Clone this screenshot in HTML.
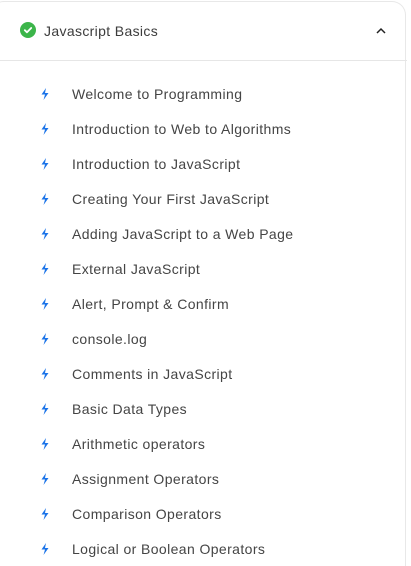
<!DOCTYPE html>
<html><head><style>
html,body{margin:0;background:#fff;font-family:"Liberation Sans",sans-serif;width:411px;height:566px;overflow:hidden}
.wrap{position:relative;width:411px;height:566px;overflow:hidden}
.card{position:absolute;left:-10px;top:1px;width:416px;height:565px;border:1px solid #e8e8e8;border-bottom:none;border-radius:14px 14px 0 0;box-sizing:border-box}
.hdr{position:absolute;left:0;top:0;width:407px;height:60px;border-bottom:1px solid #e6e6e6}
.chk{position:absolute;left:20px;top:22px;width:16px;height:16px;border-radius:50%;background:#3cb54a}
.title{position:absolute;left:44px;top:23px;font-size:14px;color:#3c3c3c;letter-spacing:0.35px}
.car{position:absolute;left:374px;top:24px}
.item{position:absolute;left:72px;font-size:14px;color:#444;letter-spacing:0.4px}
.ic{position:absolute;left:40px}
</style></head><body>
<div class="wrap">
<div class="card"></div>
<div class="hdr">
<div class="chk"><svg width="16" height="16" viewBox="0 0 16 16"><path d="M4.8 8.2l2.2 2.1 4.2-4.3" stroke="#fff" stroke-width="1.8" fill="none" stroke-linecap="round" stroke-linejoin="round"/></svg></div>
<div class="title">Javascript Basics</div>
<svg class="car" width="14" height="14" viewBox="0 0 14 14"><path d="M3 9l4-4 4 4" stroke="#222" stroke-width="1.5" fill="none"/></svg>
</div>
<div id="list"></div>
</div>
<script>
const items=["Welcome to Programming","Introduction to Web to Algorithms","Introduction to JavaScript","Creating Your First JavaScript","Adding JavaScript to a Web Page","External JavaScript","Alert, Prompt & Confirm","console.log","Comments in JavaScript","Basic Data Types","Arithmetic operators","Assignment Operators","Comparison Operators","Logical or Boolean Operators"];
let h="";items.forEach((t,i)=>{const y=94+35*i;
h+=`<svg class="ic" style="top:${y-6}px" width="10" height="12" viewBox="0 0 10 12"><path d="M6 0L1.5 6.5H5L3.5 12 8.5 5H5Z" fill="#1a73e8"/></svg><div class="item" style="top:${y-8}px">${t.replace('&','&amp;')}</div>`});
document.getElementById('list').innerHTML=h;
</script>
</body></html>
